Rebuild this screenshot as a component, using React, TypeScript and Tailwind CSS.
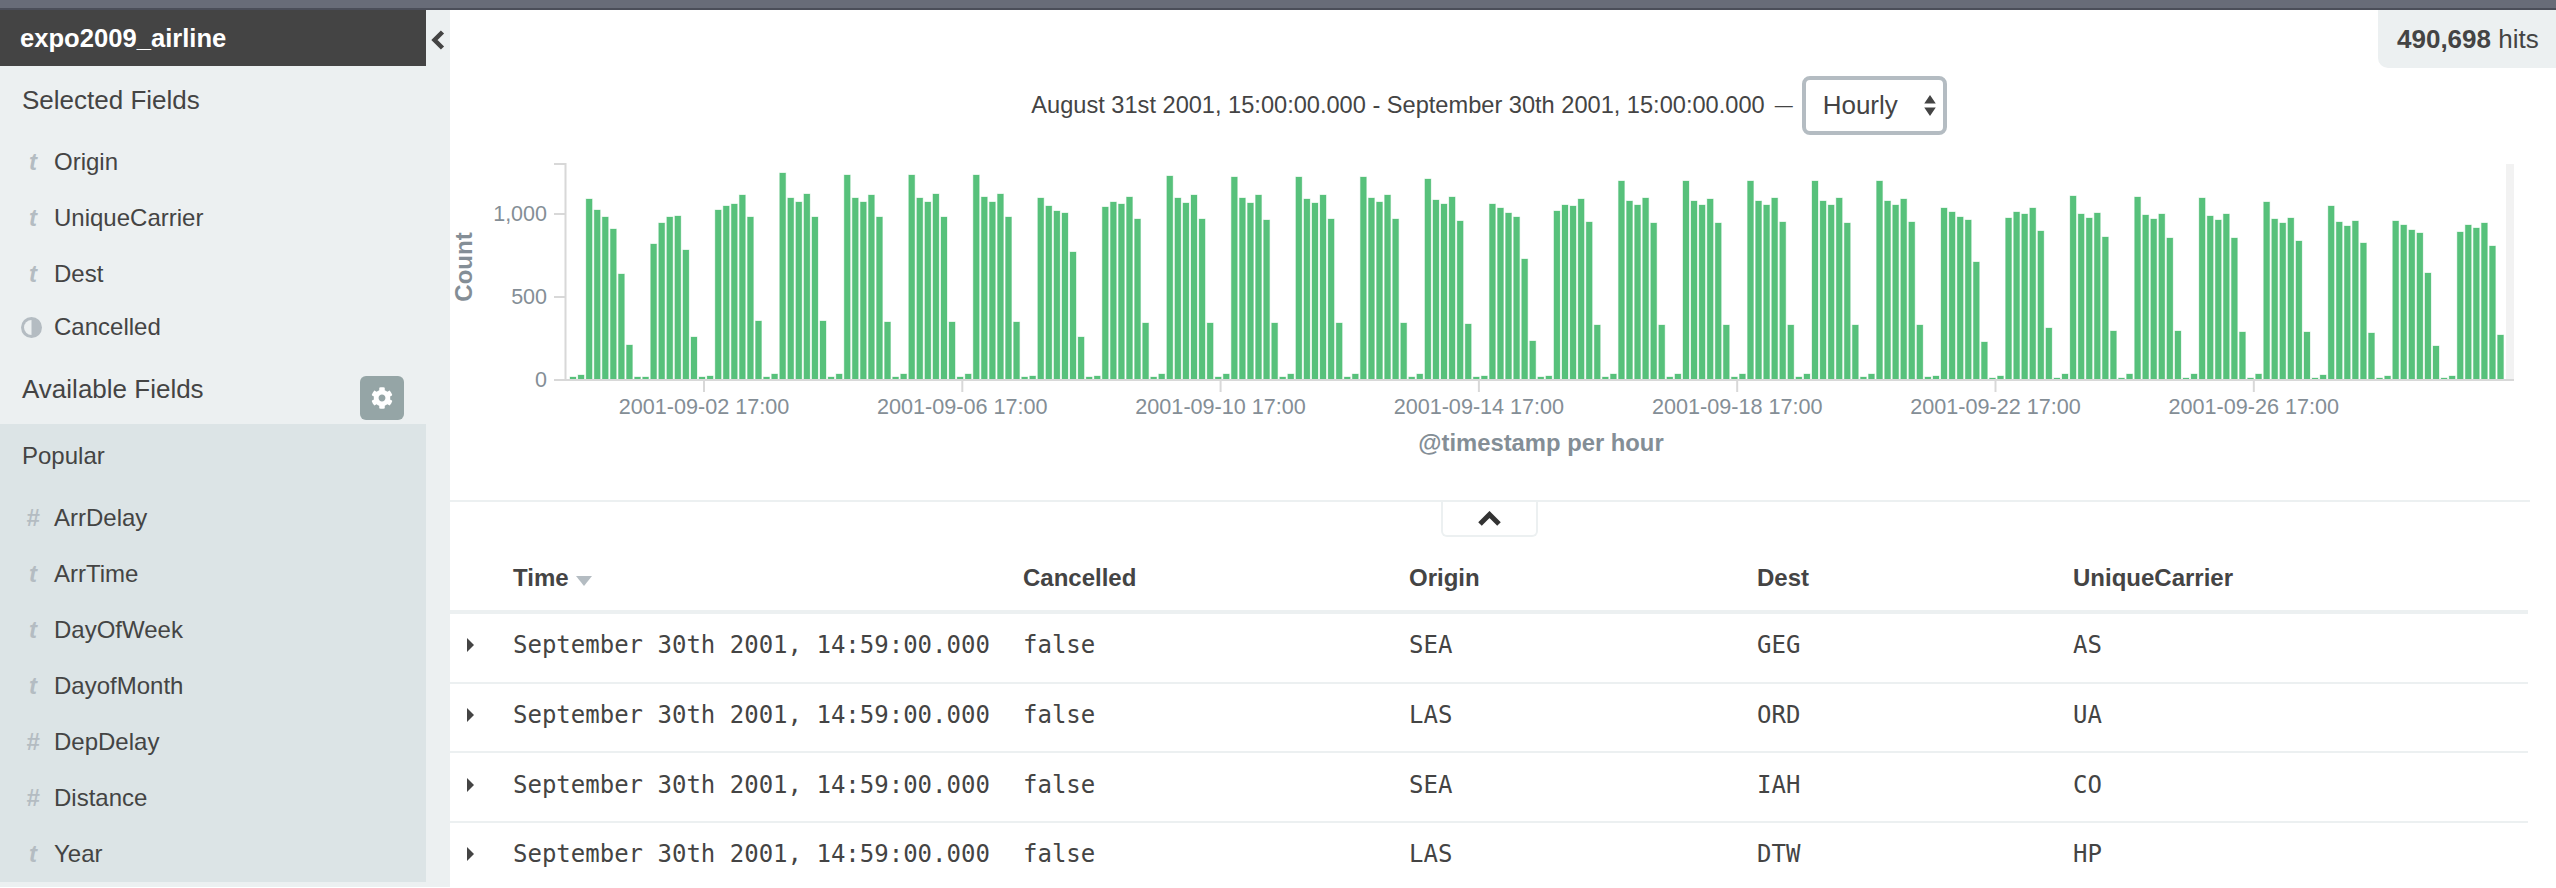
import React from "react";
import { FaCog } from "react-icons/fa";

// [two small night bars, then the six daytime bars] per day, in px above the baseline
const days: number[][] = [
  [2, 4, 180, 169, 162, 150, 105, 34],
  [2, 2, 135, 156, 162, 163, 129, 42],
  [2, 3, 169, 173, 175, 184, 162, 58],
  [2, 5, 206, 181, 177, 185, 162, 58],
  [2, 5, 204, 181, 177, 184, 162, 57],
  [2, 5, 204, 181, 177, 185, 162, 57],
  [2, 5, 204, 182, 177, 185, 162, 57],
  [2, 3, 181, 173, 168, 166, 127, 42],
  [2, 3, 172, 177, 175, 182, 160, 56],
  [2, 5, 203, 181, 176, 184, 160, 56],
  [2, 5, 202, 181, 176, 184, 159, 56],
  [2, 5, 202, 180, 176, 184, 160, 56],
  [2, 5, 202, 181, 177, 184, 160, 56],
  [2, 5, 200, 179, 175, 182, 158, 55],
  [2, 3, 175, 171, 166, 162, 120, 38],
  [2, 3, 168, 174, 173, 180, 157, 54],
  [2, 5, 198, 178, 174, 181, 156, 54],
  [2, 5, 198, 178, 174, 180, 156, 54],
  [2, 5, 198, 178, 174, 181, 157, 54],
  [2, 5, 198, 178, 174, 181, 156, 54],
  [2, 5, 198, 178, 174, 180, 157, 54],
  [2, 3, 171, 167, 162, 159, 117, 37],
  [1, 3, 161, 167, 165, 171, 148, 51],
  [1, 5, 183, 165, 161, 166, 142, 48],
  [1, 5, 182, 164, 160, 165, 141, 48],
  [1, 5, 181, 163, 159, 165, 141, 47],
  [1, 5, 177, 160, 156, 161, 138, 47],
  [1, 4, 173, 157, 153, 158, 136, 46],
  [1, 3, 158, 154, 149, 146, 106, 33],
  [1, 3, 147, 154, 151, 156, 133, 44],
];

const xLabels = [
  "2001-09-02 17:00",
  "2001-09-06 17:00",
  "2001-09-10 17:00",
  "2001-09-14 17:00",
  "2001-09-18 17:00",
  "2001-09-22 17:00",
  "2001-09-26 17:00",
];

const selectedFields = [
  { type: "t", name: "Origin" },
  { type: "t", name: "UniqueCarrier" },
  { type: "t", name: "Dest" },
];

const popularFields = [
  { type: "#", name: "ArrDelay" },
  { type: "t", name: "ArrTime" },
  { type: "t", name: "DayOfWeek" },
  { type: "t", name: "DayofMonth" },
  { type: "#", name: "DepDelay" },
  { type: "#", name: "Distance" },
  { type: "t", name: "Year" },
];

const rows = [
  ["false", "SEA", "GEG", "AS"],
  ["false", "LAS", "ORD", "UA"],
  ["false", "SEA", "IAH", "CO"],
  ["false", "LAS", "DTW", "HP"],
];

const FieldRow = ({ type, name }: { type: string; name: string }) => (
  <div className="flex h-[56px] items-center text-[24px] text-[#444444]">
    <span className="w-[54px] pl-[22px] pr-[10px] text-center font-bold italic text-[#b4bcc2]">{type}</span>
    <span>{name}</span>
  </div>
);

const Sidebar = () => (
  <aside className="flex h-[877px] w-[450px] shrink-0 flex-col bg-[#ecf0f1]">
    <div className="flex h-[56px] shrink-0">
      <div className="flex w-[426px] items-center bg-[#444444] pl-[20px] text-[25.6px] font-bold text-white">
        expo2009_airline
      </div>
      <div className="flex flex-1 items-center justify-center pt-[4px]">
        <svg width="14" height="20" viewBox="0 0 14 20" fill="none" stroke="#444444" strokeWidth="4.5">
          <path d="M11.5 2 L3.5 10 L11.5 18" />
        </svg>
      </div>
    </div>
    <div className="flex h-[68px] items-center pl-[22px] text-[26px] text-[#444444]">Selected Fields</div>
    {selectedFields.map((f) => (
      <FieldRow key={f.name} type={f.type} name={f.name} />
    ))}
    <div className="flex h-[50px] items-center text-[24px] text-[#444444]">
      <span className="flex w-[54px] justify-center pl-[10px]">
        <svg width="21" height="21" viewBox="0 0 21 21" className="-ml-[2px]">
          <circle cx="10.5" cy="10.5" r="10.5" fill="#b4bcc2" />
          <path d="M10.5 3 A7.5 7.5 0 0 0 10.5 18 Z" fill="#ecf0f1" />
        </svg>
      </span>
      <span>Cancelled</span>
    </div>
    <div className="flex h-[72px] items-start justify-between pl-[22px] pr-[22px] text-[26px] text-[#444444]">
      <span className="mt-[20px] leading-[34px]">Available Fields</span>
      <button className="mr-[24px] mt-[24px] flex h-[44px] w-[44px] items-center justify-center rounded-[6px] bg-[#95a5a6] text-[22px] text-white">
        <FaCog />
      </button>
    </div>
    <div className="flex w-[426px] flex-col bg-[#dce4e6]">
      <div className="flex h-[66px] items-center pb-[2px] pl-[22px] text-[24px] text-[#444444]">Popular</div>
      {popularFields.map((f) => (
        <FieldRow key={f.name} type={f.type} name={f.name} />
      ))}
    </div>
  </aside>
);

// drawn in page coordinates minus the chart's origin (450, 145)
const Histogram = () => {
  const y0 = 234;
  return (
    <svg width="2078" height="320" viewBox="0 0 2078 320" className="block" style={{ fontFamily: "'Liberation Sans', sans-serif" }}>
      <rect x="2056" y="19" width="8" height="216" fill="#f2f2f2" />
      {days.flat().map((h, i) => (
        <rect
          key={i}
          x={120 + i * 8.065}
          y={y0 - h}
          width="6"
          height={h}
          fill="#57c17b"
          stroke="#57c17b"
          strokeOpacity="0.3"
          strokeWidth="1"
        />
      ))}
      <path d="M115.5 18 V235 M104 19 H116 M104 69 H116 M104 152 H116 M104 235 H116 M116 235 H2064" fill="none" stroke="#d8d8d8" strokeWidth="2" />
      {xLabels.map((label, i) => {
        const x = 254 + i * 258.3;
        return (
          <g key={label}>
            <path d={`M${x} 235 V247`} stroke="#d8d8d8" strokeWidth="2" />
            <text x={x} y="268.5" textAnchor="middle" fontSize="21.6" fill="#848e96">
              {label}
            </text>
          </g>
        );
      })}
      <text x="97" y="76" textAnchor="end" fontSize="21.5" fill="#848e96">1,000</text>
      <text x="97" y="159" textAnchor="end" fontSize="21.5" fill="#848e96">500</text>
      <text x="97" y="242" textAnchor="end" fontSize="21.5" fill="#848e96">0</text>
      <text transform="translate(22 122) rotate(-90)" textAnchor="middle" fontSize="24" fontWeight="700" fill="#848e96">Count</text>
      <text x="1091" y="306" textAnchor="middle" fontSize="23.8" fontWeight="700" fill="#848e96">@timestamp per hour</text>
    </svg>
  );
};

const DocTable = () => (
  <div className="w-[2078px]">
    <div className="grid h-[77px] grid-cols-[63px_510px_386px_348px_316px_1fr] items-center border-b-4 border-[#ecf0f1] pt-[9px] text-[24px] font-bold text-[#444444]">
      <span />
      <span className="flex items-center">
        Time
        <svg width="16" height="10" viewBox="0 0 16 10" className="ml-[7px] mt-[5px]">
          <path d="M0 0 H16 L8 10 Z" fill="#b4bcc2" />
        </svg>
      </span>
      <span>Cancelled</span>
      <span>Origin</span>
      <span>Dest</span>
      <span>UniqueCarrier</span>
    </div>
    {rows.map((row, i) => (
      <div
        key={i}
        className="grid h-[69.7px] grid-cols-[63px_510px_386px_348px_316px_1fr] items-center border-b-2 border-[#ecf0f1] pb-[5px] text-[24px] text-[#444444]"
        style={{ fontFamily: "'DejaVu Sans Mono', monospace" }}
      >
        <span className="pl-[17px]">
          <svg width="7" height="14" viewBox="0 0 7 14" className="block">
            <path d="M0 0 L7 7 L0 14 Z" fill="#444444" />
          </svg>
        </span>
        <span>September 30th 2001, 14:59:00.000</span>
        <span>{row[0]}</span>
        <span>{row[1]}</span>
        <span>{row[2]}</span>
        <span>{row[3]}</span>
      </div>
    ))}
  </div>
);

export default function App() {
  return (
    <div className="h-[888px] w-[2556px] overflow-hidden bg-white" style={{ fontFamily: "'Liberation Sans', Arial, sans-serif" }}>
      <div className="h-[8px] bg-[#686c78]" />
      <div className="h-[2px] bg-[#4b4e59]" />
      <div className="flex">
        <Sidebar />
        <main className="flex min-w-0 flex-1 flex-col">
          <div className="flex justify-end">
            <div className="flex h-[58px] w-[178px] items-center rounded-bl-[10px] bg-[#ecf0f1] pl-[19px] text-[26px] text-[#444444]">
              <b>490,698</b>&nbsp;hits
            </div>
          </div>
          <div className="mt-[8px] flex h-[59px] w-[2078px] items-center justify-center text-[23.6px] text-[#444444]">
            <span>August 31st 2001, 15:00:00.000 - September 30th 2001, 15:00:00.000</span>
            <span className="ml-[10px] text-[18px]">—</span>
            <div className="relative ml-[9px] flex h-[59px] w-[145px] items-center rounded-[8px] border-4 border-[#b4bcc2] pl-[17px] text-[26px]">
              Hourly
              <svg width="14" height="23" viewBox="0 0 14 24" className="absolute right-[6px] top-[14px]">
                <path d="M7 1 L13 10 H1 Z M7 23 L1 14 H13 Z" fill="#444444" />
              </svg>
            </div>
          </div>
          <div className="mt-[10px] h-[355px]">
            <Histogram />
          </div>
          <div className="h-[2px] w-[2080px] bg-[#ecf0f1]" />
          <div className="flex w-[2078px] justify-center">
            <div className="flex h-[35px] w-[97px] items-center justify-center rounded-b-[6px] border-2 border-t-0 border-[#ecf0f1]">
              <svg width="25" height="15" viewBox="0 0 25 15" fill="none" stroke="#333333" strokeWidth="5">
                <path d="M3 13 L12.5 3.5 L22 13" />
              </svg>
            </div>
          </div>
          <DocTable />
        </main>
      </div>
    </div>
  );
}
